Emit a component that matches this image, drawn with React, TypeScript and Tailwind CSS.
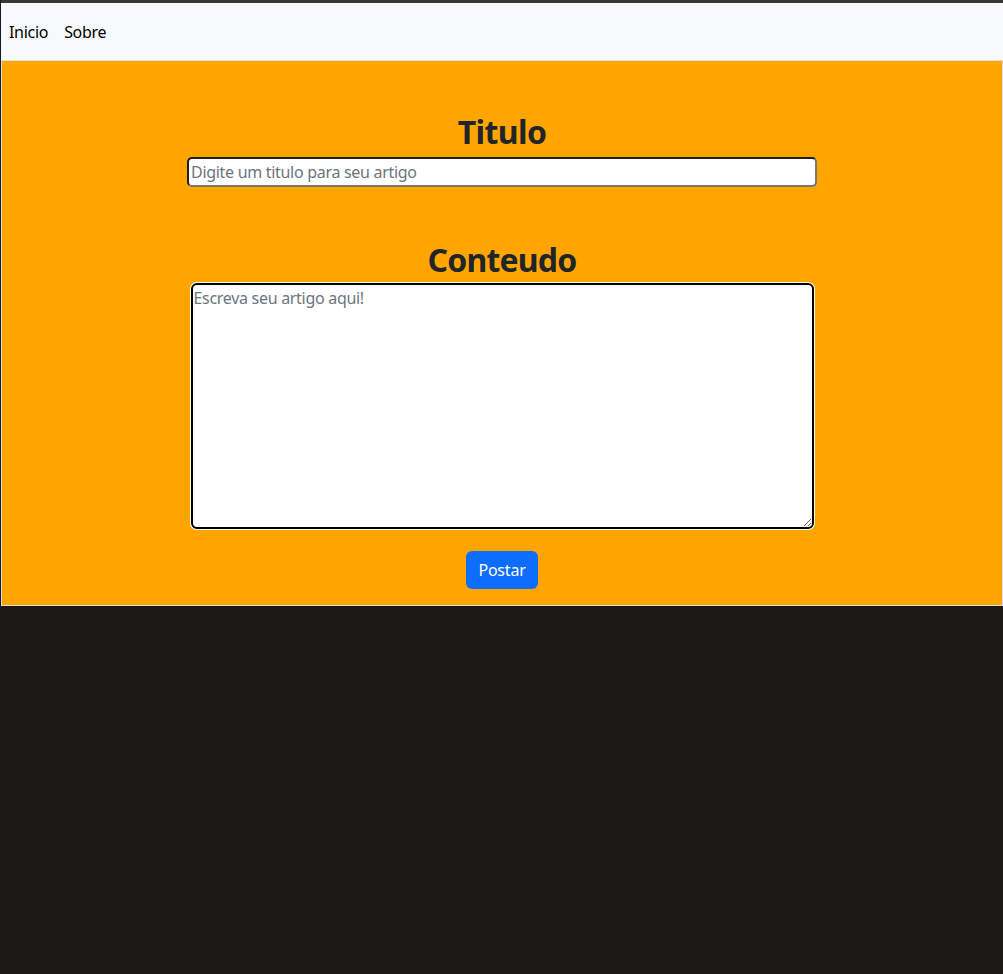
import React from "react";

export default function App() {
  const font = { fontFamily: '"Noto Sans", "Open Sans", sans-serif' };
  return (
    <div className="min-h-[974px] bg-[#1b1a19] pl-px" style={font}>
      <div className="h-[3px] bg-[#383838]" />
      <nav className="h-[58px] bg-[#f8f9fa] border-b border-[#dee2e6] flex items-center gap-4 pl-2 text-[16px] text-black tracking-[-0.3px]">
        <a className="cursor-pointer">Inicio</a>
        <a className="cursor-pointer">Sobre</a>
      </nav>
      <main className="bg-[#ffa500] border border-t-0 border-[#dcdcdc] flex flex-col items-center pt-[52px] pb-[16px]">
        <h2 className="text-[32px] leading-[38px] font-bold text-[#212529] mb-[6px] tracking-[-0.6px]">Titulo</h2>
        <input
          className="w-[630px] h-[30px] bg-white rounded-[5px] border-2 border-t-[#1f1f1f] border-l-[#1f1f1f] border-b-[#767676] border-r-[#767676] px-[2px] text-[16px] tracking-[-0.3px] placeholder:text-[#6c757d] outline-none"
          placeholder="Digite um titulo para seu artigo"
        />
        <h2 className="text-[32px] leading-[38px] font-bold text-[#212529] mt-[54px] mb-[4px] tracking-[-0.8px]">Conteudo</h2>
        <textarea
          className="w-[623px] h-[246px] bg-white rounded-[6px] border-2 border-black shadow-[0_0_0_1px_white] px-[1px] pt-[1px] text-[16px] tracking-[-0.3px] placeholder:text-[#6c757d] outline-none resize-y"
          placeholder="Escreva seu artigo aqui!"
        />
        <button className="mt-[22px] h-[38px] px-3 rounded-[6px] bg-[#0d6efd] text-white text-[16px] tracking-[-0.2px]">
          Postar
        </button>
      </main>
    </div>
  );
}
